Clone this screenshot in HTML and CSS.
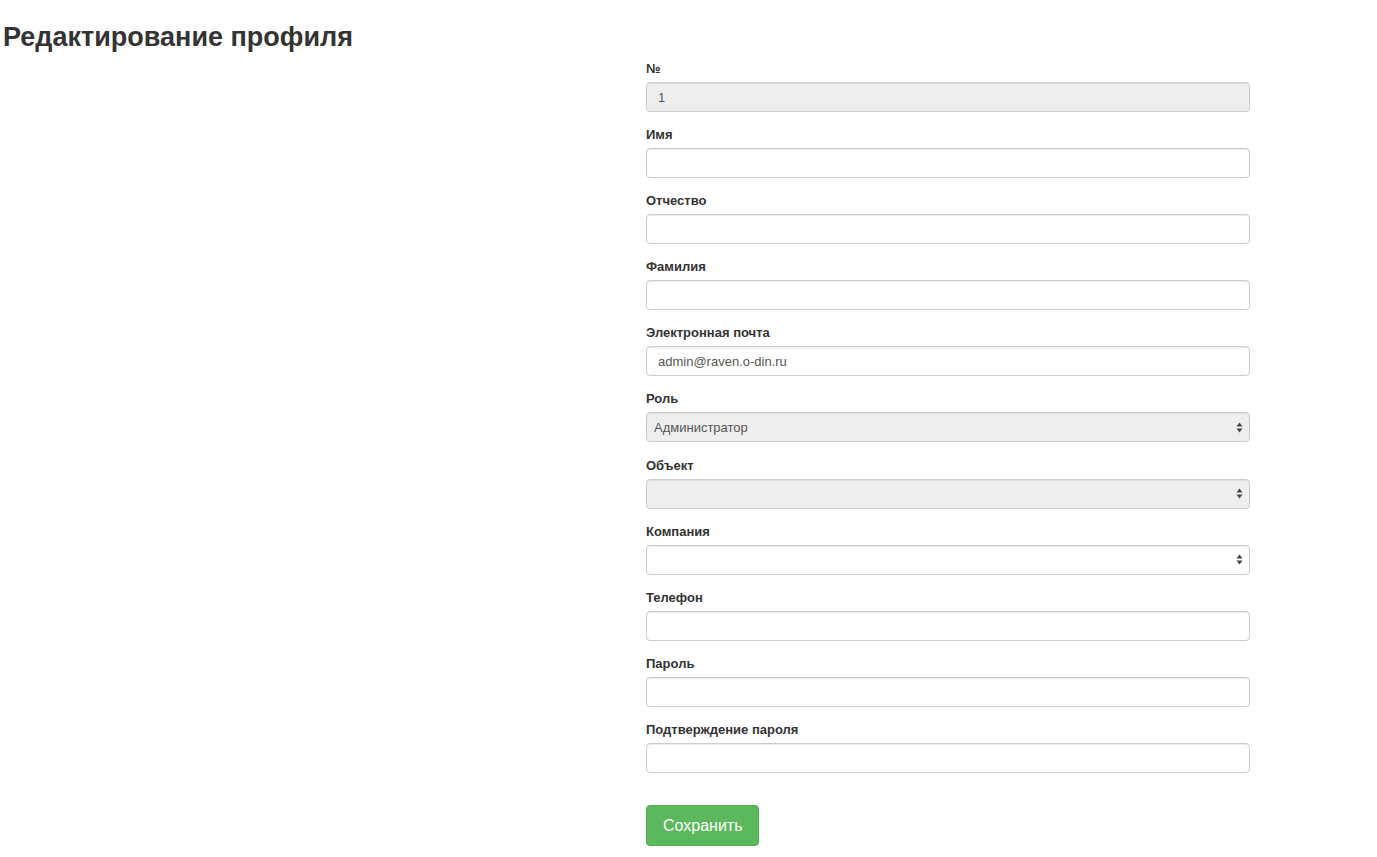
FILE: index.html
```html
<!DOCTYPE html>
<html lang="ru">
<head>
<meta charset="utf-8">
<title>Редактирование профиля</title>
<link rel="stylesheet" href="styles.css">
</head>
<body>
<h3 class="page-title">Редактирование профиля</h3>
<div class="layout">
  <div class="spacer"></div>
  <form class="profile-form">
    <div class="form-group">
      <label class="control-label">№</label>
      <input class="form-control" type="text" value="1" disabled>
    </div>
    <div class="form-group">
      <label class="control-label">Имя</label>
      <input class="form-control" type="text">
    </div>
    <div class="form-group">
      <label class="control-label">Отчество</label>
      <input class="form-control" type="text">
    </div>
    <div class="form-group">
      <label class="control-label">Фамилия</label>
      <input class="form-control" type="text">
    </div>
    <div class="form-group">
      <label class="control-label">Электронная почта</label>
      <input class="form-control" type="text" value="admin@raven.o-din.ru">
    </div>
    <div class="form-group">
      <label class="control-label">Роль</label>
      <select class="form-control select" disabled><option>Администратор</option></select>
    </div>
    <div class="form-group">
      <label class="control-label">Объект</label>
      <select class="form-control select" disabled><option></option></select>
    </div>
    <div class="form-group">
      <label class="control-label">Компания</label>
      <select class="form-control select"><option></option></select>
    </div>
    <div class="form-group">
      <label class="control-label">Телефон</label>
      <input class="form-control" type="text">
    </div>
    <div class="form-group">
      <label class="control-label">Пароль</label>
      <input class="form-control" type="password">
    </div>
    <div class="form-group">
      <label class="control-label">Подтверждение пароля</label>
      <input class="form-control" type="password">
    </div>
    <div class="actions">
      <button class="btn-save" type="button">Сохранить</button>
    </div>
  </form>
</div>
</body>
</html>
```

FILE: styles.css
```css
* { box-sizing: border-box; }
html, body { margin: 0; padding: 0; background: #fff; }
body {
  font-family: "Liberation Sans", Arial, sans-serif;
  color: #333;
  font-size: 13px;
}
.page-title {
  margin: 0;
  padding: 21px 0 0 3px;
  font-size: 27px;
  line-height: 32px;
  font-weight: bold;
  color: #333;
}
.layout {
  display: flex;
  padding-top: 8px;
}
.spacer { width: 646px; flex: none; }
.profile-form { width: 604px; flex: none; }
.form-group { margin-bottom: 15.1px; }
.control-label {
  display: block;
  font-weight: bold;
  font-size: 13px;
  line-height: 16px;
  margin-bottom: 5px;
  color: #333;
}
.form-control {
  display: block;
  width: 100%;
  height: 30px;
  padding: 5px 11px;
  font-family: "Liberation Sans", Arial, sans-serif;
  font-size: 13px;
  color: #555;
  background: #fff;
  border: 1px solid #ccc;
  border-radius: 4px;
  box-shadow: inset 0 1px 1px rgba(0,0,0,0.075);
  outline: none;
}
.form-control:disabled {
  background-color: #eee;
  color: #555;
  opacity: 1;
}
.select {
  -webkit-appearance: none;
  appearance: none;
  padding: 5px 24px 5px 7px;
  background-image: url("data:image/svg+xml;utf8,<svg xmlns='http://www.w3.org/2000/svg' width='7' height='11' viewBox='0 0 7 11'><path d='M3.5 0.5 L6.5 4.5 H0.5 Z' fill='%23444'/><path d='M3.5 10.5 L6.5 6.5 H0.5 Z' fill='%23444'/></svg>");
  background-repeat: no-repeat;
  background-position: right 6px center;
  background-size: 7px 11px;
}
.select:disabled {
  background-color: #eee;
}
.actions { padding-top: 17px; }
.btn-save {
  display: inline-block;
  height: 41px;
  padding: 9px 15px 9px 16px;
  font-family: "Liberation Sans", Arial, sans-serif;
  font-size: 16px;
  line-height: 22px;
  color: #fff;
  background: #5cb85c;
  border: 1px solid #4cae4c;
  border-radius: 4px;
  cursor: pointer;
}
```
